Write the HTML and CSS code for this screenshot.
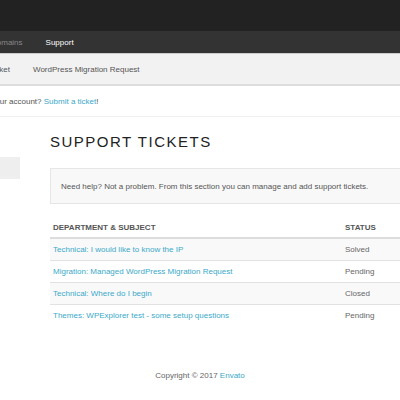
FILE: index.html
```html
<!DOCTYPE html>
<html lang="en">
<head>
    <meta charset="UTF-8">
    <meta name="viewport" content="width=device-width, initial-scale=1.0">
    <title>Support Tickets</title>
    <link rel="stylesheet" href="styles.css">
</head>
<body>
    <div class="topbar"></div>

    <nav class="mainnav">
        <a href="#">Domains</a>
        <a href="#" class="active">Support</a>
    </nav>

    <nav class="subnav">
        <a href="#">Submit Ticket</a>
        <a href="#">WordPress Migration Request</a>
    </nav>

    <div class="notice-bar">
        <p>Have a question about your account? <a href="#">Submit a ticket</a>!</p>
    </div>

    <div class="main">
        <aside class="sidebar">
            <div class="side-item"></div>
        </aside>

        <section class="content">
            <h1>Support Tickets</h1>
            <div class="help-box">Need help? Not a problem. From this section you can manage and add support tickets.</div>

            <table class="tickets">
                <thead>
                    <tr>
                        <th>Department &amp; Subject</th>
                        <th>Status</th>
                    </tr>
                </thead>
                <tbody>
                    <tr>
                        <td><a href="#">Technical: I would like to know the IP</a></td>
                        <td>Solved</td>
                    </tr>
                    <tr>
                        <td><a href="#">Migration: Managed WordPress Migration Request</a></td>
                        <td>Pending</td>
                    </tr>
                    <tr>
                        <td><a href="#">Technical: Where do I begin</a></td>
                        <td>Closed</td>
                    </tr>
                    <tr>
                        <td><a href="#">Themes: WPExplorer test - some setup questions</a></td>
                        <td>Pending</td>
                    </tr>
                </tbody>
            </table>
        </section>
    </div>

    <footer class="footer">
        Copyright &copy; 2017 <a href="#">Envato</a>
    </footer>
</body>
</html>
```

FILE: styles.css
```css
body {
    font-family: "Liberation Sans", Arial, sans-serif;
    font-size: 8px;
    color: #666;
    margin: 0;
    overflow: hidden;
    background-color: #fff;
}
a {
    color: #3ba9c9;
    text-decoration: none;
}
.topbar {
    height: 31px;
    background-color: #222;
}
.mainnav {
    height: 22px;
    background-color: #333;
    display: flex;
    align-items: center;
    gap: 23px;
    margin-left: -9px;
}
.mainnav a {
    color: #888;
}
.mainnav a.active {
    color: #fff;
}
.subnav {
    box-sizing: border-box;
    height: 33px;
    background-color: #f2f2f2;
    border-top: 1px solid #ccc;
    border-bottom: 2px solid #ddd;
    display: flex;
    align-items: center;
    gap: 23px;
    margin-left: -38px;
}
.subnav a {
    color: #555;
}
.notice-bar {
    height: 30px;
    border-bottom: 1px solid #f0f0f0;
    display: flex;
    align-items: center;
}
.notice-bar p {
    margin: 0 0 0 -91px;
    white-space: nowrap;
    color: #555;
}
.main {
    display: grid;
    grid-template-columns: 20px 380px;
    gap: 30px;
    padding-top: 16px;
}
.side-item {
    height: 22px;
    margin-top: 24px;
    background-color: #eee;
}
.content h1 {
    font-size: 15px;
    font-weight: normal;
    letter-spacing: 1.5px;
    text-transform: uppercase;
    color: #222;
    margin: 0 0 17px;
    line-height: 18px;
}
.help-box {
    background-color: #f8f8f8;
    border: 1px solid #e6e6e6;
    height: 34px;
    padding: 0 10px;
    display: flex;
    align-items: center;
    color: #555;
    margin-bottom: 13px;
}
.tickets {
    width: 100%;
    border-collapse: collapse;
}
.tickets th {
    text-align: left;
    text-transform: uppercase;
    font-weight: bold;
    color: #555;
    padding: 0 3px;
    height: 20px;
    border-bottom: 2px solid #ddd;
}
.tickets th:first-child {
    width: 286px;
}
.tickets td {
    height: 21px;
    padding: 0 3px;
    border-top: 1px solid #e2e2e2;
}
.tickets tbody tr:nth-child(odd) {
    background-color: #f9f9f9;
}
.footer {
    text-align: center;
    margin-top: 45px;
    color: #666;
}
```
